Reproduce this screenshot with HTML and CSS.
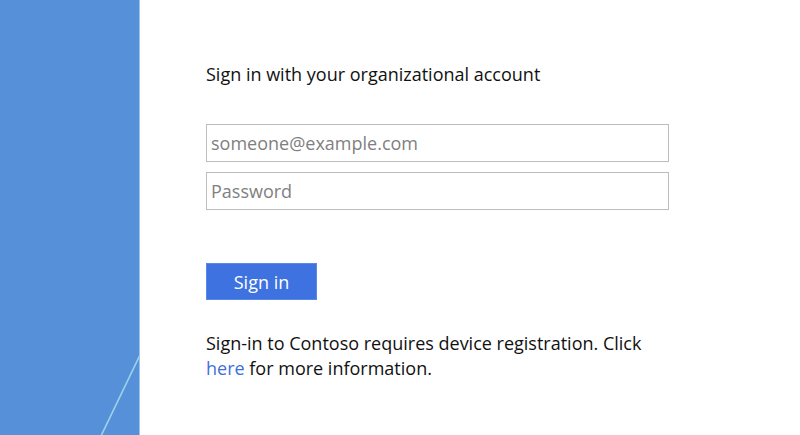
FILE: index.html
```html
<!DOCTYPE html>
<html>
<head>
<meta charset="utf-8">
<link rel="stylesheet" href="styles.css">
</head>
<body>
<div class="page">
  <aside class="side">
    <svg class="side-art" width="140" height="435" viewBox="0 0 140 435">
      <line x1="139.5" y1="356" x2="101" y2="436" stroke="#9fd3ea" stroke-width="1.6"/>
    </svg>
  </aside>
  <main class="content">
    <h1 class="title">Sign in with your organizational account</h1>
    <form class="form">
      <input class="field" type="text" placeholder="someone@example.com">
      <input class="field" type="password" placeholder="Password">
      <button class="btn" type="button">Sign in</button>
    </form>
    <p class="note">Sign-in to Contoso requires device registration. Click <a href="#" class="link">here</a> for more information.</p>
  </main>
</div>
</body>
</html>
```
FILE: styles.css
```css
html, body {
  margin: 0;
  padding: 0;
  background: #fff;
}
body {
  font-family: "Open Sans", "Noto Sans", sans-serif;
  color: #111;
}
.page {
  display: flex;
  height: 435px;
  overflow: hidden;
}
.side {
  width: 139px;
  flex: none;
  background: #5590d9;
  border-right: 1px solid #9cc2ee;
  position: relative;
}
.side-art {
  position: absolute;
  left: 0;
  top: 0;
}
.content {
  padding: 61px 0 0 66px;
}
.title {
  margin: 0;
  font-size: 18px;
  font-weight: 400;
  line-height: 26px;
  color: #111;
}
.form {
  display: flex;
  flex-direction: column;
  align-items: flex-start;
  margin-top: 37px;
}
.field {
  box-sizing: border-box;
  width: 463px;
  height: 38px;
  margin: 0 0 10px 0;
  padding: 0 4px;
  border: 1px solid #bdbdbd;
  font-family: inherit;
  font-size: 18px;
  color: #111;
  outline: none;
}
.field::placeholder {
  color: #7f7f7f;
}
.btn {
  margin-top: 43px;
  width: 111px;
  height: 37px;
  border: 1px solid #5a87ea;
  background: #3d72e0;
  color: #fff;
  font-family: inherit;
  font-size: 18px;
  padding: 0;
}
.note {
  margin: 31px 0 0 0;
  width: 455px;
  font-size: 18px;
  line-height: 25px;
  color: #111;
}
.link {
  color: #3f6fde;
  text-decoration: none;
}
```
